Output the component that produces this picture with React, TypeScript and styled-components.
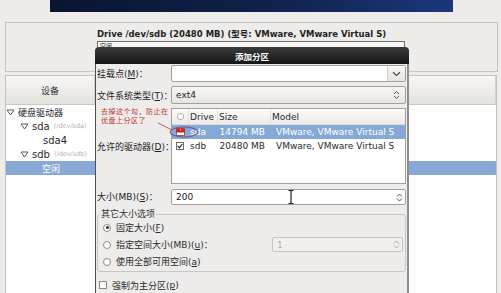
import React from 'react';
import styled, { createGlobalStyle, css } from 'styled-components';

const GlobalStyle = createGlobalStyle`
  html, body {
    margin: 0;
    padding: 0;
    background: #edecea;
  }
  body {
    font-family: "DejaVu Sans", "Noto Sans CJK SC", sans-serif;
    font-size: 9px;
    color: #1e1e1e;
  }
`;

const Screen = styled.div`
  position: relative;
  width: 501px;
  height: 293px;
  overflow: hidden;
  background: #edecea;
`;

const Banner = styled.div`
  margin-left: 50px;
  width: 403px;
  height: 12px;
  background: linear-gradient(90deg, #0a1531 0%, #0f1f47 50%, #1a387c 100%);
`;

const DrivePanel = styled.div`
  box-sizing: border-box;
  margin: 10px 3px 0 5px;
  height: 50px;
  border: 1px solid #c6c4bf;
  padding: 6px 0 0 91px;
`;

const DriveTitle = styled.div`
  font-weight: bold;
  font-size: 8.5px;
  line-height: 10px;
  white-space: nowrap;
`;

const DriveBar = styled.div`
  box-sizing: border-box;
  margin-top: 2px;
  width: 308px;
  height: 24px;
  border: 1px solid #6f6f6f;
  background: #f7f6f4;
  font-size: 6px;
  line-height: 7px;
  padding-left: 2px;
  color: #333;
`;

const DeviceTree = styled.div`
  box-sizing: border-box;
  margin: 3px 4px 0 5px;
  height: 240px;
  border: 1px solid #c6c4bf;
  background: #ffffff;
`;

const TreeHeader = styled.div`
  display: flex;
  height: 28px;
  border-bottom: 1px solid #cbc9c4;
  background: linear-gradient(#f8f7f6, #e4e2de);
`;

const HeaderCell = styled.div<{ $width?: number }>`
  display: flex;
  align-items: center;
  justify-content: center;
  ${({ $width }) => ($width ? `width: ${$width}px;` : 'flex: 1;')}
  border-right: 1px solid #d3d1cc;
  color: #333;
  font-size: 9px;
`;

const TreeRow = styled.div<{ $indent: number; $selected?: boolean }>`
  display: flex;
  align-items: center;
  height: 14px;
  padding-left: ${({ $indent }) => $indent}px;
  font-size: 9px;
  white-space: nowrap;
  ${({ $selected }) =>
    $selected &&
    css`
      background: #88a9d5;
      color: #ffffff;
    `}
`;

const Expander = styled.svg`
  width: 12px;
  height: 7px;
  flex: none;
`;

const DevName = styled.span`
  font-size: 10px;
  color: #2a2a2a;
`;

const DevPath = styled.span`
  margin-left: 4px;
  font-size: 6.5px;
  color: #b2b2b2;
`;

/* ---------- dialog ---------- */

const Dialog = styled.div`
  position: absolute;
  left: 95px;
  top: 47px;
  width: 314px;
  bottom: -10px;
  display: flex;
  flex-direction: column;
`;

const TitleBar = styled.div`
  height: 17px;
  display: flex;
  align-items: center;
  justify-content: center;
  border-radius: 4px 4px 0 0;
  background: linear-gradient(#3c3c3c, #151515);
  color: #ffffff;
  font-weight: bold;
  font-size: 8.5px;
`;

const DialogBody = styled.div`
  flex: 1;
  display: grid;
  grid-template-columns: 74px 235px;
  grid-auto-rows: min-content;
  row-gap: 4px;
  padding: 1px 0 0 1px;
  background: #edeceb;
  border-left: 1px solid #4d4d4d;
  border-right: 2px solid #8e8e8e;
`;

const FieldLabel = styled.div`
  align-self: center;
  white-space: nowrap;
  font-size: 9px;
  color: #222;
  u {
    text-decoration: underline;
  }
`;

const Entry = styled.div<{ $height: number; $disabled?: boolean }>`
  box-sizing: border-box;
  height: ${({ $height }) => $height}px;
  display: flex;
  align-items: center;
  border: 1px solid ${({ $disabled }) => ($disabled ? '#c6c4bf' : '#a39f99')};
  border-radius: 2px;
  background: ${({ $disabled }) => ($disabled ? '#f1f0ee' : '#ffffff')};
  color: ${({ $disabled }) => ($disabled ? '#b0b0b0' : '#222')};
  font-size: 9px;
`;

const EntryText = styled.span`
  flex: 1;
  padding-left: 4px;
`;

const ComboButton = styled.div`
  box-sizing: border-box;
  height: 18px;
  display: flex;
  align-items: center;
  border: 1px solid #a39f99;
  border-radius: 2px;
  background: linear-gradient(#f8f7f5, #e6e4e0);
  font-size: 9px;
`;

const ArrowBox = styled.div<{ $divider?: boolean }>`
  width: 17px;
  align-self: stretch;
  display: flex;
  align-items: center;
  justify-content: center;
  ${({ $divider }) =>
    $divider &&
    css`
      border-left: 1px solid #d0cec9;
      background: linear-gradient(#f8f7f5, #e6e4e0);
    `}
`;

const SpinArrows = styled.div<{ $disabled?: boolean }>`
  width: 9px;
  align-self: stretch;
  display: flex;
  align-items: center;
  justify-content: center;
  margin-right: 1px;
  opacity: ${({ $disabled }) => ($disabled ? 0.45 : 1)};
`;

const DriveList = styled.div`
  box-sizing: border-box;
  height: 76px;
  border: 1px solid #a39f99;
  background: #ffffff;
`;

const ListHeader = styled.div`
  display: grid;
  grid-template-columns: 16px 29px 53px 1fr;
  height: 15px;
  border-bottom: 1px solid #dedcd8;
  background: linear-gradient(#fbfbfa, #ecebe8);
  color: #2a2a2a;
  font-size: 9px;
`;

const ListHeadCell = styled.div`
  display: flex;
  align-items: center;
  justify-content: center;
  padding-left: 1px;
  &:not(:first-child) {
    justify-content: flex-start;
  }
  & + & {
    border-left: 1px solid #e2e0dc;
  }
`;

const ListRow = styled.div<{ $selected?: boolean }>`
  display: grid;
  grid-template-columns: 16px 29px 53px 1fr;
  height: 14px;
  align-items: center;
  font-size: 9px;
  white-space: nowrap;
  ${({ $selected }) =>
    $selected
      ? css`
          background: #86a8d6;
          color: #ffffff;
        `
      : css`
          color: #2a2a2a;
        `}
`;

const ListCell = styled.div<{ $pad?: number; $right?: boolean }>`
  display: flex;
  justify-content: ${({ $right }) => ($right ? 'flex-end' : 'flex-start')};
  padding-left: ${({ $pad }) => $pad ?? 0}px;
  padding-right: ${({ $right }) => ($right ? 5 : 0)}px;
  overflow: hidden;
  &:first-child {
    justify-content: center;
  }
`;

const OptionFrame = styled.fieldset`
  grid-column: 1 / -1;
  margin: 0;
  padding: 0 0 2px 5px;
  border: 1px solid #c8c6c1;
  border-radius: 3px;
  display: flex;
  flex-direction: column;
  gap: 2px;
`;

const FrameLegend = styled.legend`
  padding: 0 1px;
  margin-left: -3px;
  font-size: 9px;
  line-height: 11px;
  color: #333;
`;

const OptionRow = styled.div`
  display: flex;
  align-items: center;
  height: 15px;
  padding-right: 2px;
`;

const Radio = styled.span<{ $checked?: boolean }>`
  box-sizing: border-box;
  width: 8px;
  height: 8px;
  border: 1px solid #8d8a85;
  border-radius: 50%;
  background: #ffffff;
  margin-right: 5px;
  display: flex;
  align-items: center;
  justify-content: center;
  &::after {
    content: '';
    width: 3px;
    height: 3px;
    border-radius: 50%;
    background: ${({ $checked }) => ($checked ? '#2a2a2a' : 'transparent')};
  }
`;

const OptionLabel = styled.span`
  flex: 1;
  font-size: 9px;
  color: #2a2a2a;
  white-space: nowrap;
`;

const CheckRow = styled.div`
  grid-column: 1 / -1;
  display: flex;
  align-items: center;
  height: 14px;
  margin-top: 2px;
  padding-left: 2px;
  font-size: 9px;
  color: #2a2a2a;
`;

const Box = styled.span`
  box-sizing: border-box;
  width: 8px;
  height: 8px;
  border: 1px solid #8d8a85;
  background: #ffffff;
  margin-right: 5px;
`;

/* ---------- annotation over the screenshot ---------- */

const Note = styled.div`
  position: absolute;
  left: 101px;
  top: 107px;
  font-family: "Noto Sans CJK SC", sans-serif;
  font-size: 7px;
  line-height: 9px;
  letter-spacing: 0.5px;
  color: #c5302c;
  white-space: nowrap;
`;

const Overlay = styled.svg`
  position: absolute;
  pointer-events: none;
`;

const Chevron = () => (
  <svg width="9" height="6" viewBox="0 0 9 6">
    <path d="M1 1.2 L4.5 4.5 L8 1.2" fill="none" stroke="#4a4a4a" strokeWidth="1.2" />
  </svg>
);

const UpDown = ({ size = 10 }: { size?: number }) => (
  <svg width="7" height={size} viewBox="0 0 7 10">
    <path d="M1 4 L3.5 1.5 L6 4 M1 6 L3.5 8.5 L6 6" fill="none" stroke="#555" strokeWidth="1" />
  </svg>
);

const TreeArrow = () => (
  <Expander viewBox="0 0 12 7">
    <path d="M1 1 L8 1 L4.5 6 Z" fill="none" stroke="#5a5a5a" strokeWidth="1" />
  </Expander>
);

export default function App() {
  return (
    <>
      <GlobalStyle />
      <Screen>
        <Banner />
        <DrivePanel>
          <DriveTitle>Drive /dev/sdb (20480 MB) (型号: VMware, VMware Virtual S)</DriveTitle>
          <DriveBar>空闲</DriveBar>
        </DrivePanel>

        <DeviceTree>
          <TreeHeader>
            <HeaderCell $width={88}>设备</HeaderCell>
            <HeaderCell />
          </TreeHeader>
          <TreeRow $indent={0}>
            <TreeArrow />
            <span>硬盘驱动器</span>
          </TreeRow>
          <TreeRow $indent={14}>
            <TreeArrow />
            <DevName>sda</DevName>
            <DevPath>(/dev/sda)</DevPath>
          </TreeRow>
          <TreeRow $indent={37}>
            <DevName>sda4</DevName>
          </TreeRow>
          <TreeRow $indent={14}>
            <TreeArrow />
            <DevName>sdb</DevName>
            <DevPath>(/dev/sdb)</DevPath>
          </TreeRow>
          <TreeRow $indent={36} $selected>
            空闲
          </TreeRow>
        </DeviceTree>

        <Dialog>
          <TitleBar>添加分区</TitleBar>
          <DialogBody>
            <FieldLabel>
              挂载点(<u>M</u>)：
            </FieldLabel>
            <Entry $height={17}>
              <EntryText />
              <ArrowBox $divider>
                <Chevron />
              </ArrowBox>
            </Entry>

            <FieldLabel>
              文件系统类型(<u>T</u>)：
            </FieldLabel>
            <ComboButton>
              <EntryText>ext4</EntryText>
              <ArrowBox>
                <UpDown />
              </ArrowBox>
            </ComboButton>

            <FieldLabel>
              允许的驱动器(<u>D</u>)：
            </FieldLabel>
            <DriveList>
              <ListHeader>
                <ListHeadCell>
                  <svg width="7" height="7" viewBox="0 0 7 7">
                    <rect x="0.5" y="0.5" width="6" height="6" rx="2.5" fill="#fff" stroke="#b3b1ac" />
                  </svg>
                </ListHeadCell>
                <ListHeadCell>Drive</ListHeadCell>
                <ListHeadCell>Size</ListHeadCell>
                <ListHeadCell>Model</ListHeadCell>
              </ListHeader>
              <ListRow $selected>
                <ListCell>
                  <svg width="9" height="8" viewBox="0 0 9 8">
                    <rect x="0.5" y="0.5" width="8" height="7" fill="#fff" stroke="#7a6a6a" />
                    <path d="M0 1 L3 0 L4.5 2 L6 0 L9 1 L9 4.5 L0 4.5 Z" fill="#d0262b" />
                  </svg>
                </ListCell>
                <ListCell $pad={2}>sda</ListCell>
                <ListCell $right>14794 MB</ListCell>
                <ListCell $pad={6}>VMware, VMware Virtual S</ListCell>
              </ListRow>
              <ListRow>
                <ListCell>
                  <svg width="8" height="8" viewBox="0 0 8 8">
                    <rect x="0.5" y="0.5" width="7" height="7" fill="#fff" stroke="#6f6c67" />
                    <path d="M1.8 4 L3.4 5.8 L6.3 2" fill="none" stroke="#222" strokeWidth="1.2" />
                  </svg>
                </ListCell>
                <ListCell $pad={2}>sdb</ListCell>
                <ListCell $right>20480 MB</ListCell>
                <ListCell $pad={6}>VMware, VMware Virtual S</ListCell>
              </ListRow>
            </DriveList>

            <FieldLabel>
              大小(MB)(<u>S</u>)：
            </FieldLabel>
            <Entry $height={16} style={{ marginTop: 1 }}>
              <EntryText>200</EntryText>
              <SpinArrows>
                <UpDown size={11} />
              </SpinArrows>
            </Entry>

            <OptionFrame>
              <FrameLegend>其它大小选项</FrameLegend>
              <OptionRow>
                <Radio $checked />
                <OptionLabel>
                  固定大小(<u>F</u>)
                </OptionLabel>
              </OptionRow>
              <OptionRow>
                <Radio />
                <OptionLabel>
                  指定空间大小(MB)(<u>u</u>)：
                </OptionLabel>
                <Entry $height={15} $disabled style={{ width: 131 }}>
                  <EntryText>1</EntryText>
                  <SpinArrows $disabled>
                    <UpDown size={11} />
                  </SpinArrows>
                </Entry>
              </OptionRow>
              <OptionRow>
                <Radio />
                <OptionLabel>
                  使用全部可用空间(<u>a</u>)
                </OptionLabel>
              </OptionRow>
            </OptionFrame>

            <CheckRow>
              <Box />
              强制为主分区(<u>p</u>)
            </CheckRow>
          </DialogBody>
        </Dialog>

        <Note>
          去掉这个勾，防止在
          <br />
          优盘上分区了
        </Note>
        <Overlay width="50" height="26" viewBox="0 0 50 26" style={{ left: 155, top: 114 }}>
          <path d="M3 9 L16 15.5" stroke="#b33a3a" strokeWidth="0.8" fill="none" />
          <ellipse cx="29" cy="18" rx="14" ry="5" fill="none" stroke="#7b4a86" strokeWidth="1" />
        </Overlay>
        <Overlay width="6" height="14" viewBox="0 0 6 14" style={{ left: 288, top: 190 }}>
          <path d="M0.5 0.5 H5.5 M3 0.5 V13.5 M0.5 13.5 H5.5" stroke="#222" strokeWidth="1.2" fill="none" />
        </Overlay>
      </Screen>
    </>
  );
}
